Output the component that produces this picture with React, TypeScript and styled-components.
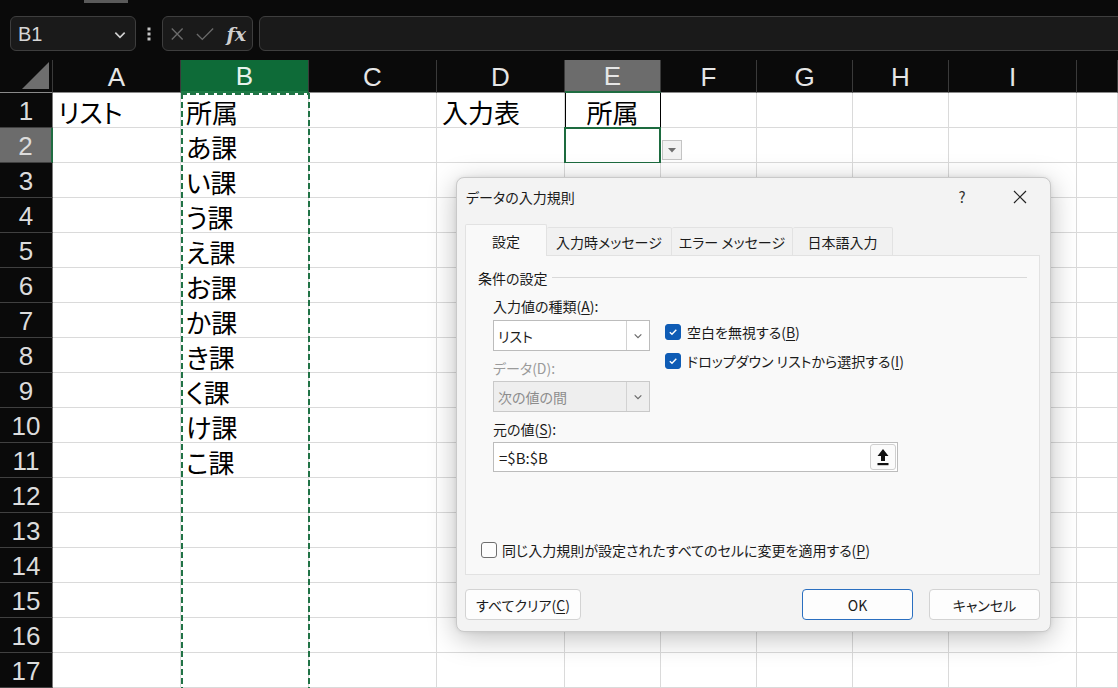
import React from 'react';
import styled, { createGlobalStyle, css } from 'styled-components';

const GlobalStyle = createGlobalStyle`
  html, body {
    margin: 0;
    padding: 0;
    background: #0a0a0a;
  }
  body {
    font-family: "Noto Sans CJK JP", "Noto Sans", sans-serif;
  }
`;

const Screen = styled.div`
  position: relative;
  width: 1118px;
  height: 688px;
  overflow: hidden;
  background: #0a0a0a;
`;

/* ---------- top bar ---------- */

const TopBar = styled.div`
  height: 60px;
  display: flex;
  flex-direction: column;
`;

const ScrollTab = styled.div`
  width: 44px;
  height: 3px;
  margin-left: 84px;
  background: #5a5a5a;
`;

const FormulaRow = styled.div`
  display: flex;
  align-items: center;
  margin: 13px -20px 0 10px;
  height: 35px;
`;

const NameBox = styled.div`
  box-sizing: border-box;
  width: 126px;
  height: 35px;
  border: 1px solid #3e3e3e;
  border-radius: 6px;
  background: #1a1a1a;
  display: flex;
  align-items: center;
  justify-content: space-between;
  padding: 2px 8px 0 7px;
  color: #d6d6d6;
  font-family: "Liberation Sans", Arial, sans-serif;
  font-size: 20px;
`;

const Dots = styled.div`
  width: 26px;
  display: flex;
  justify-content: center;
  color: #c4c4c4;
`;

const FxBox = styled.div`
  box-sizing: border-box;
  width: 91px;
  height: 35px;
  border: 1px solid #3e3e3e;
  border-radius: 6px;
  background: #1a1a1a;
  display: flex;
  align-items: center;
  gap: 12px;
  padding: 0 6px 0 7px;
`;

const FxLabel = styled.span`
  font-family: "DejaVu Serif", "Liberation Serif", serif;
  font-style: italic;
  font-weight: bold;
  font-size: 19px;
  color: #cfcfcf;
  margin-left: auto;
`;

const FormulaInput = styled.div`
  flex: 1;
  height: 35px;
  margin-left: 6px;
  box-sizing: border-box;
  border: 1px solid #3e3e3e;
  border-radius: 6px;
  background: #1a1a1a;
`;

/* ---------- sheet ---------- */

const SheetWrap = styled.div`
  position: relative;
`;

const Sheet = styled.div`
  display: grid;
  grid-template-columns: 53px repeat(4, 128px) repeat(4, 96px) 128px 1fr;
  grid-template-rows: 33px repeat(17, 35px);
`;

const Corner = styled.div`
  box-sizing: border-box;
  background: #0a0a0a;
  border-right: 1px solid #3a3a3a;
  border-bottom: 1px solid #8a8a8a;
  display: flex;
  align-items: flex-end;
  justify-content: flex-end;
  padding: 0 3px 3px 0;
`;

type HeadState = 'none' | 'selected' | 'active';

const ColHeader = styled.div<{ $state: HeadState }>`
  box-sizing: border-box;
  display: flex;
  align-items: center;
  justify-content: center;
  padding-top: 2px;
  font-family: "Liberation Sans", Arial, sans-serif;
  font-size: 26px;
  color: #e6e6e6;
  background: #0a0a0a;
  border-right: 1px solid #3a3a3a;
  border-bottom: 1px solid #8a8a8a;
  ${({ $state }) =>
    $state === 'selected' &&
    css`
      background: #0e6b38;
      color: #e8f2ec;
      border-bottom: 2px solid #1d7a45;
    `}
  ${({ $state }) =>
    $state === 'active' &&
    css`
      background: #6c6c6c;
      border-bottom: 2px solid #1f6d42;
    `}
`;

const RowHeader = styled.div<{ $active?: boolean }>`
  box-sizing: border-box;
  display: flex;
  align-items: center;
  justify-content: center;
  padding-top: 3px;
  font-family: "Liberation Sans", Arial, sans-serif;
  font-size: 26px;
  color: #dcdcdc;
  background: ${({ $active }) => ($active ? '#6c6c6c' : '#0a0a0a')};
  border-bottom: 1px solid #404040;
  border-right: ${({ $active }) => ($active ? '2px solid #1f6d42' : '1px solid #7a7a7a')};
`;

const Cell = styled.div<{ $center?: boolean; $boxed?: boolean; $active?: boolean }>`
  position: relative;
  box-sizing: border-box;
  background: #fff;
  border-right: 1px solid #dadada;
  border-bottom: 1px solid #dadada;
  padding: 3px 5px 0;
  font-family: "Noto Sans CJK JP", sans-serif;
  font-feature-settings: "palt";
  font-size: 26px;
  line-height: 31px;
  color: #000;
  white-space: nowrap;
  text-align: ${({ $center }) => ($center ? 'center' : 'left')};
  ${({ $boxed }) =>
    $boxed &&
    css`
      box-shadow: inset 1px 0 0 #000;
      border-right-color: #000;
    `}
  ${({ $active }) =>
    $active &&
    css`
      &::after {
        content: '';
        position: absolute;
        left: -1px;
        top: -1px;
        right: -1px;
        bottom: -2px;
        border: 2px solid #1d6b3f;
        pointer-events: none;
      }
    `}
`;

const MarchingAnts = styled.div`
  position: absolute;
  left: 181px;
  top: 33px;
  width: 129px;
  bottom: 0;
  pointer-events: none;
  background:
    repeating-linear-gradient(to bottom, #217346 0 6px, transparent 6px 9px) left top / 2px 100% no-repeat,
    repeating-linear-gradient(to bottom, #217346 0 6px, transparent 6px 9px) right top / 2px 100% no-repeat,
    repeating-linear-gradient(to right, #217346 0 6px, transparent 6px 9px) left top / 100% 2px no-repeat;
`;

const DropButton = styled.div`
  position: absolute;
  left: 97px;
  top: 12px;
  width: 20px;
  height: 20px;
  box-sizing: border-box;
  border: 1px solid #c4c4c4;
  background: #f2f2f2;
  display: flex;
  align-items: center;
  justify-content: center;
  z-index: 2;
`;

/* ---------- dialog ---------- */

const Dialog = styled.div`
  position: absolute;
  left: 456px;
  top: 117px;
  width: 595px;
  height: 455px;
  box-sizing: border-box;
  background: #f3f3f3;
  border: 1px solid #c9c9c9;
  border-radius: 8px;
  box-shadow: 0 6px 28px rgba(0, 0, 0, 0.26), 0 0 4px rgba(0, 0, 0, 0.08);
  display: flex;
  flex-direction: column;
  color: #1b1b1b;
  font-family: "Noto Sans CJK JP", "Noto Sans", sans-serif;
  font-feature-settings: "palt";
  font-size: 14px;
  z-index: 5;
`;

const TitleBar = styled.div`
  height: 37px;
  display: flex;
  align-items: center;
  padding-left: 9px;
`;

const Title = styled.span`
  font-size: 14px;
  flex: 1;
`;

const TitleIcon = styled.div<{ $w: number }>`
  width: ${({ $w }) => $w}px;
  display: flex;
  justify-content: center;
  align-items: center;
  font-size: 15px;
  color: #333;
`;

const Body = styled.div`
  padding: 10px 10px 0 8px;
  display: flex;
  flex-direction: column;
`;

const Tabs = styled.div`
  display: flex;
  align-items: flex-end;
  height: 31px;
  margin-bottom: -1px;
  position: relative;
  z-index: 1;
`;

const Tab = styled.div<{ $active?: boolean; $w: number }>`
  box-sizing: border-box;
  width: ${({ $w }) => $w}px;
  height: ${({ $active }) => ($active ? 32 : 29)}px;
  display: flex;
  align-items: center;
  justify-content: center;
  font-size: 14px;
  background: ${({ $active }) => ($active ? '#f9f9f9' : '#f1f1f1')};
  border: 1px solid #e2e2e2;
  border-bottom: ${({ $active }) => ($active ? 'none' : '1px solid #e2e2e2')};
  border-radius: 2px 2px 0 0;
  & + & {
    border-left: none;
  }
`;

const Panel = styled.div`
  box-sizing: border-box;
  width: 575px;
  height: 320px;
  background: #f9f9f9;
  border: 1px solid #e2e2e2;
  padding: 12px 12px 14px 12px;
  display: flex;
  flex-direction: column;
`;

const SectionHead = styled.div`
  display: flex;
  align-items: center;
  gap: 4px;
  line-height: 20px;

  &::after {
    content: '';
    flex: 1;
    height: 1px;
    background: #d9d9d9;
    margin-top: -2px;
  }
`;

const FormBlock = styled.div`
  margin: 8px 0 0 15px;
`;

const FieldRow = styled.div`
  display: flex;
  gap: 15px;
`;

const FieldColumn = styled.div`
  display: flex;
  flex-direction: column;
`;

const CheckColumn = styled.div`
  display: flex;
  flex-direction: column;
  gap: 9px;
  padding-top: 26px;
`;

const Label = styled.div<{ $disabled?: boolean; $gap?: number }>`
  line-height: 20px;
  margin-top: ${({ $gap }) => $gap ?? 0}px;
  color: ${({ $disabled }) => ($disabled ? '#9b9b9b' : '#1b1b1b')};
  & u {
    text-decoration-thickness: 1px;
    text-underline-offset: 2px;
  }
`;

const SelectBox = styled.div<{ $disabled?: boolean; $gap: number }>`
  box-sizing: border-box;
  width: 157px;
  height: 31px;
  margin-top: ${({ $gap }) => $gap}px;
  display: flex;
  border: 1px solid ${({ $disabled }) => ($disabled ? '#c9c9c9' : '#bcbcbc')};
  background: ${({ $disabled }) => ($disabled ? '#eeeeee' : '#ffffff')};
  color: ${({ $disabled }) => ($disabled ? '#8c8c8c' : '#1b1b1b')};
`;

const SelectValue = styled.div`
  flex: 1;
  display: flex;
  align-items: center;
  padding-left: 4px;
`;

const SelectArrow = styled.div`
  width: 22px;
  border-left: 1px solid #d2d2d2;
  display: flex;
  align-items: center;
  justify-content: center;
`;

const CheckRow = styled.label`
  display: flex;
  align-items: center;
  gap: 6px;
  line-height: 20px;
  white-space: nowrap;
  & u {
    text-decoration-thickness: 1px;
    text-underline-offset: 2px;
  }
`;

const Box = styled.span<{ $checked?: boolean }>`
  box-sizing: border-box;
  width: 16px;
  height: 16px;
  border-radius: 3px;
  display: inline-flex;
  align-items: center;
  justify-content: center;
  background: ${({ $checked }) => ($checked ? '#0f5cb5' : '#fdfdfd')};
  border: 1px solid ${({ $checked }) => ($checked ? '#0f5cb5' : '#6f6f6f')};
`;

const SourceInput = styled.div`
  box-sizing: border-box;
  width: 405px;
  height: 30px;
  margin-top: 3px;
  display: flex;
  align-items: center;
  border: 1px solid #bcbcbc;
  background: #fff;
  padding: 0 1px 0 5px;
  font-size: 15px;
`;

const PickButton = styled.div`
  box-sizing: border-box;
  margin-left: auto;
  width: 26px;
  height: 26px;
  border: 1px solid #cfcfcf;
  border-radius: 3px;
  background: #fbfbfb;
  display: flex;
  align-items: center;
  justify-content: center;
`;

const BottomCheck = styled(CheckRow)`
  margin-top: auto;
  margin-left: 3px;
  gap: 5px;
`;

const Footer = styled.div`
  display: flex;
  margin-top: 14px;
  gap: 16px;
`;

const Button = styled.button<{ $w: number; $primary?: boolean }>`
  box-sizing: border-box;
  width: ${({ $w }) => $w}px;
  height: 31px;
  border-radius: 4px;
  border: 1px solid ${({ $primary }) => ($primary ? '#2a6fc0' : '#d3d3d3')};
  background: #fdfdfd;
  font-family: inherit;
  font-feature-settings: "palt";
  font-size: 14px;
  color: #1b1b1b;
  padding: 0;
  & u {
    text-decoration-thickness: 1px;
    text-underline-offset: 2px;
  }
`;

const Spacer = styled.div`
  flex: 1;
`;

/* ---------- icons ---------- */

const Chevron = ({ color = '#d0d0d0', size = 12 }: { color?: string; size?: number }) => (
  <svg width={size} height={size} viewBox="0 0 12 12">
    <polyline points="2,4 6,8 10,4" fill="none" stroke={color} strokeWidth="1.4" />
  </svg>
);

const Tick = () => (
  <svg width="10" height="10" viewBox="0 0 10 10">
    <polyline points="1.8,5.2 4,7.3 8.3,2.8" fill="none" stroke="#fff" strokeWidth="1.4" />
  </svg>
);

const columns: { key: string; state: HeadState }[] = [
  { key: 'A', state: 'none' },
  { key: 'B', state: 'selected' },
  { key: 'C', state: 'none' },
  { key: 'D', state: 'none' },
  { key: 'E', state: 'active' },
  { key: 'F', state: 'none' },
  { key: 'G', state: 'none' },
  { key: 'H', state: 'none' },
  { key: 'I', state: 'none' },
  { key: '', state: 'none' },
];

const listB = ['所属', 'あ課', 'い課', 'う課', 'え課', 'お課', 'か課', 'き課', 'く課', 'け課', 'こ課'];

const cellText = (row: number, col: number): string => {
  if (row === 1 && col === 0) return 'リスト';
  if (col === 1 && row <= listB.length) return listB[row - 1];
  if (row === 1 && col === 3) return '入力表';
  if (row === 1 && col === 4) return '所属';
  return '';
};

export default function App() {
  const rows = Array.from({ length: 17 }, (_, i) => i + 1);

  return (
    <Screen>
      <GlobalStyle />
      <TopBar>
        <ScrollTab />
        <FormulaRow>
          <NameBox>
            <span>B1</span>
            <Chevron size={14} />
          </NameBox>
          <Dots>
            <svg width="4" height="14" viewBox="0 0 4 14">
              <rect x="0.5" y="0.5" width="3" height="3" fill="#c4c4c4" />
              <rect x="0.5" y="5.5" width="3" height="3" fill="#c4c4c4" />
              <rect x="0.5" y="10.5" width="3" height="3" fill="#c4c4c4" />
            </svg>
          </Dots>
          <FxBox>
            <svg width="16" height="16" viewBox="0 0 16 16">
              <path d="M2 2 L14 14 M14 2 L2 14" stroke="#6b6b6b" strokeWidth="1.5" />
            </svg>
            <svg width="20" height="16" viewBox="0 0 20 16">
              <polyline points="1,8 7,14 19,2" fill="none" stroke="#6b6b6b" strokeWidth="1.5" />
            </svg>
            <FxLabel>fx</FxLabel>
          </FxBox>
          <FormulaInput />
        </FormulaRow>
      </TopBar>

      <SheetWrap>
        <Sheet>
          <Corner>
            <svg width="27" height="27" viewBox="0 0 27 27">
              <polygon points="27,0 27,27 0,27" fill="#6e6e6e" />
            </svg>
          </Corner>
          {columns.map((c, i) => (
            <ColHeader key={`h${i}`} $state={c.state}>
              {c.key}
            </ColHeader>
          ))}
          {rows.map((r) => (
            <React.Fragment key={r}>
              <RowHeader $active={r === 2}>{r}</RowHeader>
              {columns.map((_, ci) => (
                <Cell
                  key={`${r}-${ci}`}
                  $center={r === 1 && ci === 4}
                  $boxed={r === 1 && ci === 4}
                  $active={r === 2 && ci === 4}
                >
                  {cellText(r, ci)}
                  {r === 2 && ci === 4 && (
                    <DropButton>
                      <svg width="8" height="5" viewBox="0 0 8 5">
                        <polygon points="0,0 8,0 4,4.5" fill="#6f6f6f" />
                      </svg>
                    </DropButton>
                  )}
                </Cell>
              ))}
            </React.Fragment>
          ))}
        </Sheet>
        <MarchingAnts />

        <Dialog>
          <TitleBar>
            <Title>データの入力規則</Title>
            <TitleIcon $w={20}>?</TitleIcon>
            <TitleIcon $w={30} style={{ margin: '0 15px 0 33px' }}>
              <svg width="14" height="14" viewBox="0 0 14 14">
                <path d="M1 1 L13 13 M13 1 L1 13" stroke="#222" strokeWidth="1.2" />
              </svg>
            </TitleIcon>
          </TitleBar>
          <Body>
            <Tabs>
              <Tab $active $w={82}>設定</Tab>
              <Tab $w={125}>入力時メッセージ</Tab>
              <Tab $w={121}>エラー メッセージ</Tab>
              <Tab $w={100}>日本語入力</Tab>
            </Tabs>
            <Panel>
              <SectionHead>条件の設定</SectionHead>
              <FormBlock>
                <FieldRow>
                  <FieldColumn>
                    <Label>
                      入力値の種類(<u>A</u>):
                    </Label>
                    <SelectBox $gap={4}>
                      <SelectValue>リスト</SelectValue>
                      <SelectArrow>
                        <Chevron color="#6a6a6a" size={10} />
                      </SelectArrow>
                    </SelectBox>
                    <Label $disabled $gap={7}>
                      データ(D):
                    </Label>
                    <SelectBox $disabled $gap={3}>
                      <SelectValue>次の値の間</SelectValue>
                      <SelectArrow>
                        <Chevron color="#6a6a6a" size={10} />
                      </SelectArrow>
                    </SelectBox>
                  </FieldColumn>
                  <CheckColumn>
                    <CheckRow>
                      <Box $checked>
                        <Tick />
                      </Box>
                      <span>
                        空白を無視する(<u>B</u>)
                      </span>
                    </CheckRow>
                    <CheckRow>
                      <Box $checked>
                        <Tick />
                      </Box>
                      <span>
                        ドロップダウン リストから選択する(<u>I</u>)
                      </span>
                    </CheckRow>
                  </CheckColumn>
                </FieldRow>
                <Label $gap={7}>
                  元の値(<u>S</u>):
                </Label>
                <SourceInput>
                  <span>=$B:$B</span>
                  <PickButton>
                    <svg width="14" height="18" viewBox="0 0 14 18">
                      <polygon points="7,1 1.5,8 5,8 5,13 9,13 9,8 12.5,8" fill="#111" />
                      <rect x="1.5" y="15" width="11" height="2.2" fill="#111" />
                    </svg>
                  </PickButton>
                </SourceInput>
              </FormBlock>
              <BottomCheck>
                <Box />
                <span>
                  同じ入力規則が設定されたすべてのセルに変更を適用する(<u>P</u>)
                </span>
              </BottomCheck>
            </Panel>
            <Footer>
              <Button $w={116}>
                すべてクリア(<u>C</u>)
              </Button>
              <Spacer />
              <Button $w={111} $primary>
                OK
              </Button>
              <Button $w={111}>キャンセル</Button>
            </Footer>
          </Body>
        </Dialog>
      </SheetWrap>
    </Screen>
  );
}
